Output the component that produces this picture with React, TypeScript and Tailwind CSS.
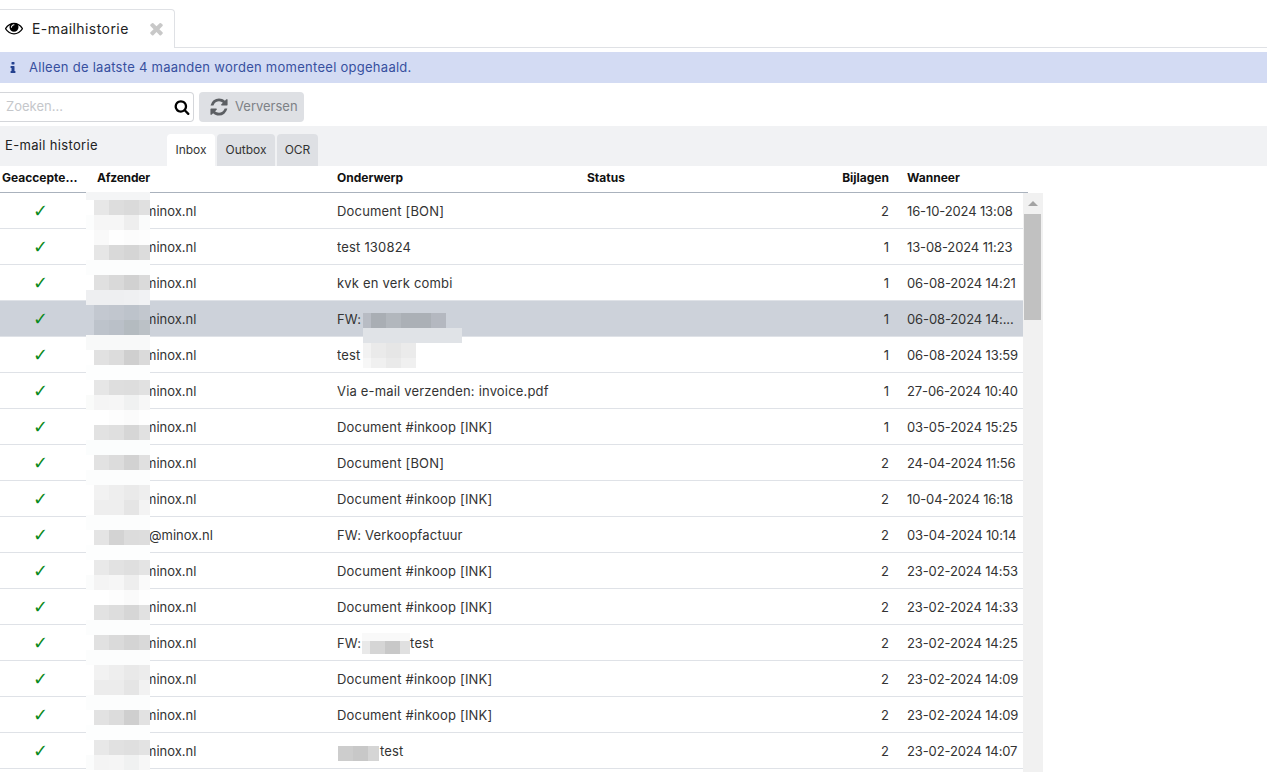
import React from "react";

type Band = { h: number; c: (string | null)[] };
const W = [8, 15, 15, 15, 11];
const all = (c: string, h = 15): Band => ({ h, c: [c, c, c, c, c] });
const b = (a: string | null, p: string, q: string, r: string, s: string): Band => ({ h: 15, c: [a, p, q, r, s] });

const senderBands: Band[] = [
  all("#f4f5f6", 8),
  b(null, "#e7e7e7", "#dddddd", "#dadada", "#e0e0e0"),
  b("#fcfdfd", "#f6f6f6", "#f6f6f6", "#eeeeee", "#fafbfb"),
  b(null, "#f9f9f9", "#fefefe", "#fcfcfc", "#fdfdfd"),
  b(null, "#e6e6e6", "#d9d9d9", "#d5d5d5", "#dcdcdc"),
  all("#fcfdfd"),
  b(null, "#e0e0e0", "#d9d9d9", "#d1d1d1", "#dadada"),
  b("#eeeff1", "#eeeff1", "#eeeff1", "#eff0f2", "#f1f2f4"),
  b(null, "#c3c8d0", "#c1c6ce", "#bdc3cb", "#c2c7ce"),
  b(null, "#bdc3cb", "#bac0c8", "#b4bbc0", "#bbc1c6"),
  all("#f8f9f9"),
  b(null, "#e1e1e1", "#dcdcdc", "#cfcfcf", "#dadada"),
  all("#fdfefe"),
  b(null, "#e6e6e6", "#dedede", "#dddddd", "#e1e1e1"),
  b("#fafbfa", "#f5f5f5", "#f6f6f6", "#f0f1f1", "#f7f7f7"),
  b(null, "#ffffff", "#fdfdfd", "#fbfbfb", "#fefefe"),
  b(null, "#e2e2e2", "#dfdfdf", "#d6d6d6", "#e1e1e1"),
  all("#fbfdfd"),
  b(null, "#e2e2e2", "#dcdcdc", "#d2d2d2", "#e0e0e0"),
  all("#fcfdfd"),
  b(null, "#f2f2f2", "#eeeeee", "#eaeaea", "#eeeeee"),
  b(null, "#eeeeee", "#eeeeee", "#e5e5e5", "#f3f3f3"),
  all("#fcfdfd"),
  b(null, "#e4e4e4", "#d3d3d3", "#dcdcdc", "#dddddd"),
  all("#fdfefe"),
  b(null, "#e9e9e9", "#e2e2e2", "#dfdfdf", "#e4e4e4"),
  b("#fbfcfc", "#f4f4f4", "#f6f6f6", "#eeeeee", "#fafafa"),
  b(null, "#ffffff", "#fdfdfd", "#fafafa", "#fefefe"),
  b(null, "#e2e2e2", "#dddddd", "#d6d6d6", "#e1e1e1"),
  all("#fcfdfd"),
  b(null, "#e1e1e1", "#dadada", "#d4d4d4", "#d9d9d9"),
  all("#fcfdfd"),
  b(null, "#f2f2f2", "#eeeeee", "#e9e9e9", "#ececec"),
  b(null, "#ececec", "#ececec", "#e5e5e5", "#f2f2f2"),
  all("#fcfdfd"),
  b(null, "#e2e2e2", "#dcdcdc", "#cfcfcf", "#e2e2e2"),
  all("#fdfefe"),
  b(null, "#e8e8e8", "#e1e1e1", "#dfdfdf", "#e3e3e3"),
  b("#fbfcfc", "#f4f4f4", "#f5f5f5", "#f0f1f1", "#f7f7f7"),
];

function SenderMosaic() {
  return (
    <div className="absolute left-[86px] top-[-1px] w-[64px] pointer-events-none">
      {senderBands.map((band, i) => (
        <div key={i} className="flex" style={{ height: band.h }}>
          {band.c.map((c, j) => (
            <div key={j} style={{ width: W[j], background: c ?? "transparent" }} />
          ))}
        </div>
      ))}
    </div>
  );
}

function Blocks({ items, h = 15 }: { items: [number, string][]; h?: number }) {
  return (
    <div className="flex" style={{ height: h }}>
      {items.map(([w, c], i) => (
        <div key={i} style={{ width: w, background: c }} />
      ))}
    </div>
  );
}

function Icon({ d, className }: { d: string; className: string }) {
  return (
    <svg viewBox="0 0 1792 1792" fill="currentColor" className={`shrink-0 ${className}`}>
      <path d={d} />
    </svg>
  );
}

const EYE = "M1664 960q-152-236-381-353 61 104 61 225 0 185-131.5 316.5t-316.5 131.5-316.5-131.5-131.5-316.5q0-121 61-225-229 117-381 353 133 205 333.5 326.5t434.5 121.5 434.5-121.5 333.5-326.5zm-720-384q0-20-14-34t-34-14q-125 0-214.5 89.5t-89.5 214.5q0 20 14 34t34 14 34-14 14-34q0-86 61-147t147-61q20 0 34-14t14-34zm848 384q0 34-20 69-140 230-376.5 368.5t-499.5 138.5-499.5-139-376.5-368q-20-35-20-69t20-69q140-229 376.5-368t499.5-139 499.5 139 376.5 368q20 35 20 69z";
const TIMES = "M1490 1322q0 40-28 68l-136 136q-28 28-68 28t-68-28l-294-294-294 294q-28 28-68 28t-68-28l-136-136q-28-28-28-68t28-68l294-294-294-294q-28-28-28-68t28-68l136-136q28-28 68-28t68 28l294 294 294-294q28-28 68-28t68 28l136 136q28 28 28 68t-28 68l-294 294 294 294q28 28 28 68z";
const INFO = "M1216 1344v128q0 26-19 45t-45 19h-512q-26 0-45-19t-19-45v-128q0-26 19-45t45-19h64v-384h-64q-26 0-45-19t-19-45v-128q0-26 19-45t45-19h384q26 0 45 19t19 45v576h64q26 0 45 19t19 45zm-128-1152v192q0 26-19 45t-45 19h-256q-26 0-45-19t-19-45v-192q0-26 19-45t45-19h256q26 0 45 19t19 45z";
const SEARCH = "M1216 832q0-185-131.5-316.5t-316.5-131.5-316.5 131.5-131.5 316.5 131.5 316.5 316.5 131.5 316.5-131.5 131.5-316.5zm512 832q0 52-38 90t-90 38q-54 0-90-38l-343-342q-179 124-399 124-143 0-273.5-55.5t-225-150-150-225-55.5-273.5 55.5-273.5 150-225 225-150 273.5-55.5 273.5 55.5 225 150 150 225 55.5 273.5q0 220-124 399l343 343q37 37 37 90z";
const REFRESH = "M1639 1056q0 5-1 7-64 268-268 434.5t-478 166.5q-146 0-282.5-55t-243.5-157l-129 129q-19 19-45 19t-45-19-19-45v-448q0-26 19-45t45-19h448q26 0 45 19t19 45-19 45l-137 137q71 66 161 102t187 36q134 0 250-65t186-179q11-17 53-117 8-23 30-23h192q13 0 22.5 9.5t9.5 22.5zm25-800v448q0 26-19 45t-45 19h-448q-26 0-45-19t-19-45 19-45l138-138q-148-137-349-137-134 0-250 65t-186 179q-11 17-53 117-8 23-30 23h-199q-13 0-22.5-9.5t-9.5-22.5v-7q65-268 270-434.5t480-166.5q146 0 284 55.5t245 156.5l130-129q19-19 45-19t45 19 19 45z";

const rows = [
  ["minox.nl", "Document [BON]", "2", "16-10-2024 13:08"],
  ["minox.nl", "test 130824", "1", "13-08-2024 11:23"],
  ["minox.nl", "kvk en verk combi", "1", "06-08-2024 14:21"],
  ["minox.nl", "FW:", "1", "06-08-2024 14:..."],
  ["minox.nl", "test", "1", "06-08-2024 13:59"],
  ["minox.nl", "Via e-mail verzenden: invoice.pdf", "1", "27-06-2024 10:40"],
  ["minox.nl", "Document #inkoop [INK]", "1", "03-05-2024 15:25"],
  ["minox.nl", "Document [BON]", "2", "24-04-2024 11:56"],
  ["minox.nl", "Document #inkoop [INK]", "2", "10-04-2024 16:18"],
  ["@minox.nl", "FW: Verkoopfactuur", "2", "03-04-2024 10:14"],
  ["minox.nl", "Document #inkoop [INK]", "2", "23-02-2024 14:53"],
  ["minox.nl", "Document #inkoop [INK]", "2", "23-02-2024 14:33"],
  ["minox.nl", "FW:", "2", "23-02-2024 14:25"],
  ["minox.nl", "Document #inkoop [INK]", "2", "23-02-2024 14:09"],
  ["minox.nl", "Document #inkoop [INK]", "2", "23-02-2024 14:09"],
  ["minox.nl", "", "2", "23-02-2024 14:07"],
];

const cols = "grid grid-cols-[81px_240px_250px_250px_72px_130px]";

function Subject({ i, text }: { i: number; text: string }) {
  if (i === 3)
    return (
      <div className="relative">
        FW:
        <div className="absolute left-[26px] top-[3px] w-[99px] z-10">
          <Blocks items={[[8, "#b8bcc4"], [15, "#a9aeb4"], [15, "#b2b7bd"], [30, "#abb0b6"], [15, "#b4b8c0"]]} />
          <Blocks items={[[99, "#e0e3e7"]]} />
          <Blocks items={[[8, "#f2f2f2"], [15, "#eaeaea"], [15, "#e6e6e6"], [15, "#ebebeb"]]} />
          <Blocks h={10} items={[[8, "#f7f7f7"], [15, "#f0f0f0"], [15, "#eaeaea"], [15, "#f0f0f0"]]} />
        </div>
      </div>
    );
  if (i === 12)
    return (
      <div className="flex items-center">
        <span>FW:</span>
        <div className="ml-[1px] mb-[2px] w-[48px] shrink-0">
          <Blocks h={8} items={[[48, "#f9f9f9"]]} />
          <Blocks h={13} items={[[8, "#e9e9e9"], [15, "#d5d5d5"], [15, "#c8c8c8"], [10, "#e0e0e0"]]} />
        </div>
        <span>test</span>
      </div>
    );
  if (i === 15)
    return (
      <div className="flex items-center">
        <div className="ml-[1px] mt-[3px] mr-[1px] w-[41px] shrink-0">
          <Blocks items={[[15, "#cdcdcd"], [15, "#c8c8c8"], [11, "#d5d5d5"]]} />
        </div>
        <span>test</span>
      </div>
    );
  return <div className="truncate">{text}</div>;
}

export default function App() {
  return (
    <div className="h-[772px] w-full overflow-hidden bg-white text-[13px] text-[#333333] font-['Inter','Liberation_Sans',sans-serif]">
      {/* Window tab strip */}
      <div className="flex h-[52px] items-start pt-[9px]">
        <div className="flex h-[39px] w-[175px] shrink-0 items-center rounded-tr-[4px] border-t border-r border-[#dfe1e5] pb-[2px] pl-[5px] text-[14px] tracking-[0.43px] text-[#222222]">
          <Icon d={EYE} className="h-[18px] w-[18px] text-black" />
          <span className="ml-[9px]">E-mailhistorie</span>
          <Icon d={TIMES} className="ml-auto mr-[8px] h-[19px] w-[19px] text-[#c8c8c8]" />
        </div>
        <div className="mt-[38px] h-px flex-1 bg-[#dfe1e5]" />
      </div>

      {/* Notice */}
      <div className="flex h-[31px] items-center bg-[#d3dbf3] pl-[6px] text-[#37509f]">
        <Icon d={INFO} className="h-[14px] w-[14px] text-[#24418f]" />
        <span className="ml-[9px] tracking-[0.27px]">Alleen de laatste 4 maanden worden momenteel opgehaald.</span>
      </div>

      {/* Toolbar */}
      <div className="flex h-[43px] items-center gap-[5px] pt-[5px]">
        <div className="flex h-[30px] w-[194px] items-center rounded-r-[4px] border border-l-0 border-[#d4d6da] pl-[6px] pr-[3px]">
          <span className="flex-1 text-[#c5c7cb]">Zoeken...</span>
          <Icon d={SEARCH} className="h-[16px] w-[16px] text-black" />
        </div>
        <button className="flex h-[30px] w-[105px] items-center rounded-[4px] bg-[#dee0e4] pl-[10px] text-[#7d8186]">
          <Icon d={REFRESH} className="h-[20px] w-[20px] text-[#5c5f63]" />
          <span className="ml-[6px]">Verversen</span>
        </button>
      </div>

      {/* Panel heading with tabs */}
      <div className="flex h-[40px] bg-[#f1f2f4]">
        <div className="w-[167px] pl-[5px] pt-[10px] tracking-[0.33px] text-[#222222]">E-mail historie</div>
        <div className="flex items-end gap-[2px] text-[12px]">
          <div className="flex h-[32px] w-[48px] items-center justify-center rounded-t-[4px] bg-white">Inbox</div>
          <div className="flex h-[32px] w-[58px] items-center justify-center rounded-t-[4px] bg-[#dee0e4]">Outbox</div>
          <div className="flex h-[32px] w-[41px] items-center justify-center rounded-t-[4px] bg-[#dee0e4]">OCR</div>
        </div>
      </div>

      {/* Table header */}
      <div className={`${cols} h-[27px] w-[1028px] items-center border-b border-[#aab2bd] pb-[2px] text-[12px] font-bold text-[#111111]`}>
        <div className="pl-[2px]">Geaccepte...</div>
        <div className="pl-[16px] tracking-[-0.2px]">Afzender</div>
        <div className="pl-[16px]">Onderwerp</div>
        <div className="pl-[16px]">Status</div>
        <div className="pr-[4px] text-right">Bijlagen</div>
        <div className="pl-[14px]">Wanneer</div>
      </div>

      {/* Table body */}
      <div className="flex">
        <div className="relative w-[1023px]">
          {rows.map((r, i) => (
            <div
              key={i}
              className={`${cols} h-[36px] items-center border-b border-[#dfe2e7] pt-[3px] ${i === 3 ? "bg-[#cdd2da]" : ""}`}
            >
              <div className="pb-[2px] text-center font-['DejaVu_Sans',sans-serif] text-[18px] font-bold leading-none text-[#0b8a1c]">✓</div>
              <div className={r[0].startsWith("@") ? "pl-[68px]" : "pl-[64px]"}>{r[0]}</div>
              <div className="pl-[16px] tracking-[0.18px]">
                <Subject i={i} text={r[1]} />
              </div>
              <div />
              <div className="pr-[4px] text-right">{r[2]}</div>
              <div className="truncate pl-[14px] tracking-[-0.12px]">{r[3]}</div>
            </div>
          ))}
          <SenderMosaic />
        </div>
        <div className="relative h-[579px] w-[20px] bg-[#f1f1f1]">
          <div className="mx-auto mt-[8px] h-0 w-0 border-x-[5px] border-b-[5px] border-x-transparent border-b-[#a3a3a3]" />
          <div className="ml-[1px] mt-[8px] h-[106px] w-[17px] bg-[#c1c1c1]" />
        </div>
      </div>
    </div>
  );
}
